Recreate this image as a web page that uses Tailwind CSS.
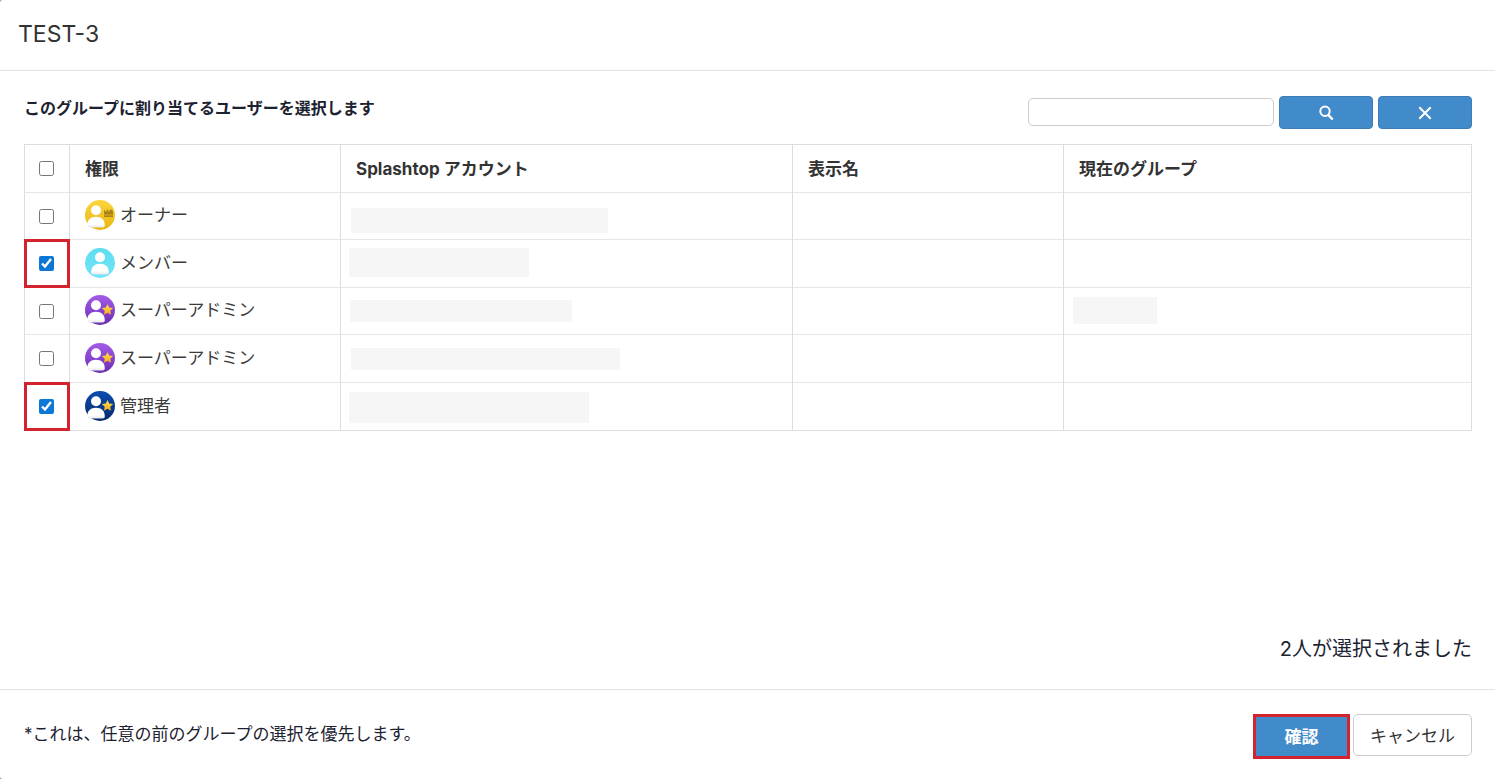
<!DOCTYPE html>
<html lang="ja">
<head>
  <meta charset="UTF-8" />
  <meta name="viewport" content="width=device-width, initial-scale=1.0"/>
  <title>TEST-3</title>
  <script src="https://cdn.jsdelivr.net/npm/@tailwindcss/browser@4"></script>
</head>
<body class="bg-[#a0a0a0] font-['Inter','Noto_Sans_CJK_JP',sans-serif] text-[#333]">

  <!-- shared icon parts -->
  <svg width="0" height="0" class="absolute" aria-hidden="true">
    <defs>
      <linearGradient id="gold" x1="0" y1="0" x2="0" y2="1"><stop offset="0" stop-color="#fbd63c"/><stop offset="1" stop-color="#e9b512"/></linearGradient>
      <linearGradient id="cyan" x1="0" y1="0" x2="0" y2="1"><stop offset="0" stop-color="#5edcf0"/><stop offset="1" stop-color="#72e6f8"/></linearGradient>
      <linearGradient id="purple" x1="0" y1="0" x2="0" y2="1"><stop offset="0" stop-color="#a45ce8"/><stop offset="1" stop-color="#6a2cb4"/></linearGradient>
      <linearGradient id="navy" x1="0" y1="0" x2="0" y2="1"><stop offset="0" stop-color="#0c4db0"/><stop offset="1" stop-color="#062a6c"/></linearGradient>
      <linearGradient id="body" x1="0" y1="0" x2="0" y2="1"><stop offset="0.7" stop-color="#fff"/><stop offset="1" stop-color="#e6e6ea"/></linearGradient>
      <linearGradient id="starfill" x1="0" y1="0" x2="0" y2="1"><stop offset="0" stop-color="#ffe04a"/><stop offset="1" stop-color="#f6ab1c"/></linearGradient>
      <g id="person">
        <circle cx="11" cy="10.3" r="5" fill="#fff"/>
        <path d="M2.2 25.5c0-5.500 3.300-8.800 8.800-8.800s8.800 3.300 8.800 8.800c0 1.300-.9 2-2.200 2H4.400c-1.300 0-2.200-.7-2.200-2z" fill="url(#body)"/>
      </g>
      <path id="star" d="M22.500 9l1.700 3.500 3.900.6-2.800 2.700.7 3.900-3.500-1.900-3.500 1.900.7-3.900-2.800-2.700 3.900-.6z" fill="url(#starfill)"/>
    </defs>
  </svg>

  <div class="min-h-screen flex flex-col bg-white rounded-l-[3px]">

    <header class="border-b border-[#e3e3e3] px-[18px] pt-[18px] pb-5">
      <h1 class="text-[23px] leading-8">TEST-3</h1>
    </header>

    <main class="flex-1 flex flex-col pl-6 pr-[23px] pt-6">
      <div class="flex justify-between items-start mb-[14px]">
        <h2 class="text-base leading-[26px] font-bold text-[#1c2230]">このグループに割り当てるユーザーを選択します</h2>
        <form class="flex items-start gap-[5px] pt-px">
          <input type="text" aria-label="検索" class="w-[246px] h-7 mt-0.5 px-2 border border-[#ccc] rounded-[5px] text-sm" />
          <button type="button" aria-label="検索する" class="w-[94px] h-[33px] flex items-center justify-center bg-[#428bca] border border-[#3b7db6] rounded">
            <svg class="size-4" viewBox="0 0 16 16" fill="none" stroke="#fff" stroke-width="2"><circle cx="7" cy="6.200" r="4.700"/><path d="M10.200 9.800l4.500 4.700" stroke-width="2.400"/></svg>
          </button>
          <button type="button" aria-label="クリア" class="w-[94px] h-[33px] flex items-center justify-center bg-[#428bca] border border-[#3b7db6] rounded">
            <svg class="size-4" viewBox="0 0 16 16" fill="none" stroke="#fff" stroke-width="2"><path d="M2.300 2.300l11.400 11.400M13.700 2.300L2.300 13.700"/></svg>
          </button>
        </form>
      </div>

      <table class="w-full table-fixed border-collapse border border-[#ddd] mt-px text-[17px] leading-6">
        <thead>
          <tr class="h-12 border-b border-[#e6e6e6] text-left">
            <th class="w-[45px] border-r border-[#ddd] pr-0.5"><input type="checkbox" aria-label="すべて選択" class="block mx-auto size-[15px]" /></th>
            <th class="w-[271px] border-r border-[#ddd] px-[15px]">権限</th>
            <th class="w-[452px] border-r border-[#ddd] px-[15px]">Splashtop アカウント</th>
            <th class="w-[271px] border-r border-[#ddd] px-[15px]">表示名</th>
            <th class="px-[15px]">現在のグループ</th>
          </tr>
        </thead>
        <tbody class="text-[#3c3c3c]">
          <tr class="h-[47px] border-b border-[#e6e6e6]">
            <td class="border-r border-[#ddd] pr-0.5"><input type="checkbox" aria-label="オーナー" class="block mx-auto size-[15px]" /></td>
            <td class="border-r border-[#ddd] px-[15px] pb-0.5">
              <div class="flex items-center gap-[5px]">
                <svg class="size-[30px]" viewBox="0 0 30 30"><circle cx="15" cy="15" r="15" fill="url(#gold)"/><path d="M19 9.500l2 2.500 1.500-3 1.500 3 1.500-3 2.500 2V17h-9z" fill="#a98518"/><path d="M19 15h9" stroke="#d9aa1c"/><use href="#person"/></svg>
                <span>オーナー</span>
              </div>
            </td>
            <td class="border-r border-[#ddd] pl-[10px] pt-2"><div class="w-[257px] h-[25px] bg-[#f6f6f6]"></div></td>
            <td class="border-r border-[#ddd]"></td>
            <td></td>
          </tr>
          <tr class="h-12 border-b border-[#e6e6e6]">
            <td class="relative border-r border-[#ddd] pr-0.5">
              <input type="checkbox" checked aria-label="メンバー" class="block mx-auto size-[15px] accent-[#0b78d8]" />
              <span class="absolute -inset-px border-3 border-[#d3232e] pointer-events-none"></span>
            </td>
            <td class="border-r border-[#ddd] px-[15px] pb-0.5">
              <div class="flex items-center gap-[5px]">
                <svg class="size-[30px]" viewBox="0 0 30 30"><circle cx="15" cy="15" r="15" fill="url(#cyan)"/><use href="#person" x="4" y="-1"/></svg>
                <span>メンバー</span>
              </div>
            </td>
            <td class="border-r border-[#ddd] pl-2 pb-0.5"><div class="w-[180px] h-[29px] bg-[#f6f6f6]"></div></td>
            <td class="border-r border-[#ddd]"></td>
            <td></td>
          </tr>
          <tr class="h-[47px] border-b border-[#e6e6e6]">
            <td class="border-r border-[#ddd] pr-0.5"><input type="checkbox" aria-label="スーパーアドミン 1" class="block mx-auto size-[15px]" /></td>
            <td class="border-r border-[#ddd] px-[15px] pb-0.5">
              <div class="flex items-center gap-[5px]">
                <svg class="size-[30px]" viewBox="0 0 30 30"><circle cx="15" cy="15" r="15" fill="url(#purple)"/><use href="#person"/><use href="#star"/></svg>
                <span>スーパーアドミン</span>
              </div>
            </td>
            <td class="border-r border-[#ddd] pl-[9px]"><div class="w-[222px] h-[22px] bg-[#f6f6f6]"></div></td>
            <td class="border-r border-[#ddd]"></td>
            <td class="pl-[9px] pb-0.5"><div class="w-[84px] h-[27px] bg-[#f6f6f6]"></div></td>
          </tr>
          <tr class="h-12 border-b border-[#e6e6e6]">
            <td class="border-r border-[#ddd] pr-0.5"><input type="checkbox" aria-label="スーパーアドミン 2" class="block mx-auto size-[15px]" /></td>
            <td class="border-r border-[#ddd] px-[15px] pb-0.5">
              <div class="flex items-center gap-[5px]">
                <svg class="size-[30px]" viewBox="0 0 30 30"><circle cx="15" cy="15" r="15" fill="url(#purple)"/><use href="#person"/><use href="#star"/></svg>
                <span>スーパーアドミン</span>
              </div>
            </td>
            <td class="border-r border-[#ddd] pl-[10px]"><div class="w-[269px] h-[22px] bg-[#f6f6f6]"></div></td>
            <td class="border-r border-[#ddd]"></td>
            <td></td>
          </tr>
          <tr class="h-12">
            <td class="relative border-r border-[#ddd] pr-0.5">
              <input type="checkbox" checked aria-label="管理者" class="block mx-auto size-[15px] accent-[#0b78d8]" />
              <span class="absolute -inset-px border-3 border-[#d3232e] pointer-events-none"></span>
            </td>
            <td class="border-r border-[#ddd] px-[15px] pb-0.5">
              <div class="flex items-center gap-[5px]">
                <svg class="size-[30px]" viewBox="0 0 30 30"><circle cx="15" cy="15" r="15" fill="url(#navy)"/><use href="#person"/><use href="#star"/></svg>
                <span>管理者</span>
              </div>
            </td>
            <td class="border-r border-[#ddd] pl-2 pt-0.5"><div class="w-[240px] h-[31px] bg-[#f6f6f6]"></div></td>
            <td class="border-r border-[#ddd]"></td>
            <td></td>
          </tr>
        </tbody>
      </table>

      <p class="mt-auto pb-6 text-right text-xl leading-8 text-[#1c2230]">2人が選択されました</p>
    </main>

    <footer class="flex justify-between items-start border-t border-[#e3e3e3] pl-6 pr-[23px] pt-6 pb-5">
      <p class="text-[17px] leading-10 text-[#1c2230]">*これは、任意の前のグループの選択を優先します。</p>
      <div class="flex items-start gap-[3px]">
        <button type="button" class="w-[97px] h-[45px] bg-[#428bca] border-3 border-[#d3232e] text-white text-[17px] leading-6 font-bold">確認</button>
        <button type="button" class="w-[119px] h-[42px] pt-0.5 bg-white border border-[#ccc] rounded-[5px] text-[17px] leading-6">キャンセル</button>
      </div>
    </footer>
  </div>

</body>
</html>
